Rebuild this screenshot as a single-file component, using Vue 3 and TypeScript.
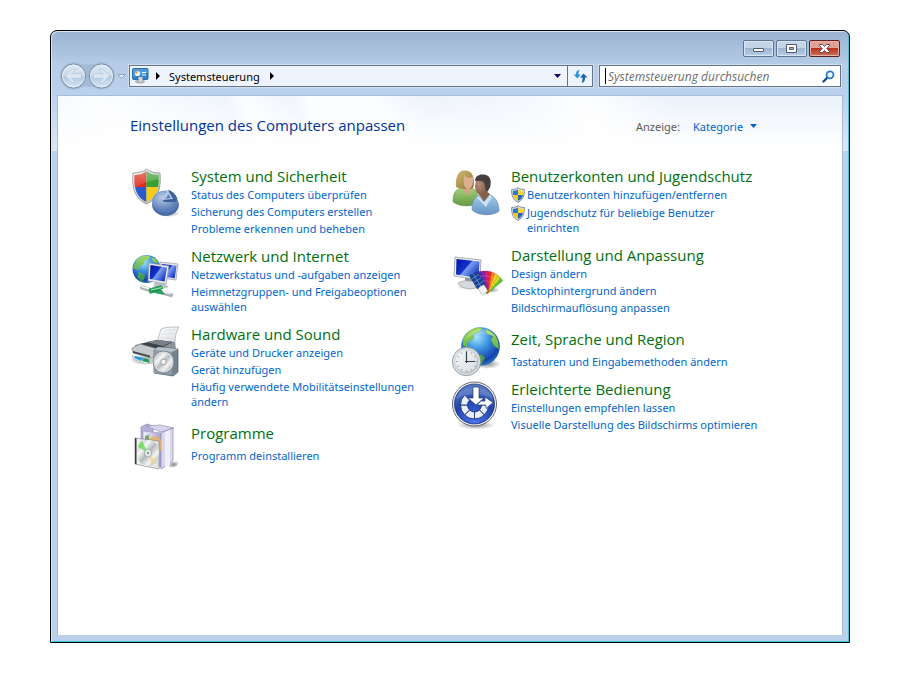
<script setup lang="ts">
import { ref } from 'vue'

type IconName =
  | 'security' | 'network' | 'hardware' | 'programs'
  | 'users' | 'appearance' | 'region' | 'access'

interface Task { text: string; shield?: boolean }
interface Category { icon: IconName; title: string; tasks: Task[] }

const columns: Category[][] = [
  [
    {
      icon: 'security',
      title: 'System und Sicherheit',
      tasks: [
        { text: 'Status des Computers überprüfen' },
        { text: 'Sicherung des Computers erstellen' },
        { text: 'Probleme erkennen und beheben' },
      ],
    },
    {
      icon: 'network',
      title: 'Netzwerk und Internet',
      tasks: [
        { text: 'Netzwerkstatus und -aufgaben anzeigen' },
        { text: 'Heimnetzgruppen- und Freigabeoptionen auswählen' },
      ],
    },
    {
      icon: 'hardware',
      title: 'Hardware und Sound',
      tasks: [
        { text: 'Geräte und Drucker anzeigen' },
        { text: 'Gerät hinzufügen' },
        { text: 'Häufig verwendete Mobilitätseinstellungen ändern' },
      ],
    },
    {
      icon: 'programs',
      title: 'Programme',
      tasks: [{ text: 'Programm deinstallieren' }],
    },
  ],
  [
    {
      icon: 'users',
      title: 'Benutzerkonten und Jugendschutz',
      tasks: [
        { text: 'Benutzerkonten hinzufügen/entfernen', shield: true },
        { text: 'Jugendschutz für beliebige Benutzer einrichten', shield: true },
      ],
    },
    {
      icon: 'appearance',
      title: 'Darstellung und Anpassung',
      tasks: [
        { text: 'Design ändern' },
        { text: 'Desktophintergrund ändern' },
        { text: 'Bildschirmauflösung anpassen' },
      ],
    },
    {
      icon: 'region',
      title: 'Zeit, Sprache und Region',
      tasks: [{ text: 'Tastaturen und Eingabemethoden ändern' }],
    },
    {
      icon: 'access',
      title: 'Erleichterte Bedienung',
      tasks: [
        { text: 'Einstellungen empfehlen lassen' },
        { text: 'Visuelle Darstellung des Bildschirms optimieren' },
      ],
    },
  ],
]

const fanColors = ['#5cc22c', '#c9de1f', '#f8cc1e', '#f3801c', '#e8262a', '#d01c8c', '#8a1fa8', '#4a2fb4']
const ticks = Array.from({ length: 12 }, (_, i) => i * 30)
const segments = [90, 135, 180, 225, 270]

const query = ref('')
const view = ref('Kategorie')
</script>

<template>
  <div class="desktop">
    <svg class="defs" aria-hidden="true">
      <defs>
        <radialGradient id="globe" cx="0.4" cy="0.25" r="0.8">
          <stop offset="0" stop-color="#a8e4fb" />
          <stop offset="0.4" stop-color="#3c93e0" />
          <stop offset="0.8" stop-color="#1440ac" />
          <stop offset="1" stop-color="#2c86cc" />
        </radialGradient>
        <linearGradient id="land" x1="0" y1="0" x2="0" y2="1">
          <stop offset="0" stop-color="#a6dc5c" />
          <stop offset="1" stop-color="#2f9440" />
        </linearGradient>
        <linearGradient id="screen" x1="0" y1="0" x2="1" y2="0.7">
          <stop offset="0" stop-color="#0512a4" />
          <stop offset="0.48" stop-color="#1233cc" />
          <stop offset="0.54" stop-color="#7ba0f0" />
          <stop offset="1" stop-color="#1231c4" />
        </linearGradient>
        <linearGradient id="silver" x1="0" y1="0" x2="1" y2="1">
          <stop offset="0" stop-color="#ffffff" />
          <stop offset="1" stop-color="#a9afb5" />
        </linearGradient>
        <linearGradient id="paper" x1="0" y1="0" x2="1" y2="1">
          <stop offset="0" stop-color="#ffffff" />
          <stop offset="1" stop-color="#d5d9dd" />
        </linearGradient>
        <linearGradient id="disc" x1="0" y1="0" x2="1" y2="1">
          <stop offset="0" stop-color="#9ea3a3" />
          <stop offset="0.3" stop-color="#f6f7f7" />
          <stop offset="0.5" stop-color="#b4babd" />
          <stop offset="0.7" stop-color="#f4f4f4" />
          <stop offset="1" stop-color="#979da0" />
        </linearGradient>
        <radialGradient id="pie" cx="0.4" cy="0.3" r="0.8">
          <stop offset="0" stop-color="#b5cae8" />
          <stop offset="1" stop-color="#4469a8" />
        </radialGradient>
        <linearGradient id="sheen" x1="0" y1="0" x2="0" y2="1">
          <stop offset="0" stop-color="#fff" stop-opacity="0.4" />
          <stop offset="1" stop-color="#fff" stop-opacity="0.05" />
        </linearGradient>
        <radialGradient id="shadow">
          <stop offset="0" stop-color="#000" stop-opacity="0.45" />
          <stop offset="1" stop-color="#000" stop-opacity="0" />
        </radialGradient>
        <linearGradient id="green" x1="0" y1="0" x2="0" y2="1">
          <stop offset="0" stop-color="#a8d07c" />
          <stop offset="1" stop-color="#629a42" />
        </linearGradient>
        <linearGradient id="blue" x1="0" y1="0" x2="0" y2="1">
          <stop offset="0" stop-color="#a9cdec" />
          <stop offset="1" stop-color="#6496c4" />
        </linearGradient>
        <linearGradient id="hair" x1="0" y1="0" x2="1" y2="1">
          <stop offset="0" stop-color="#d3bb72" />
          <stop offset="1" stop-color="#8c7034" />
        </linearGradient>
        <radialGradient id="face" cx="0.3" cy="0.4" r="0.8">
          <stop offset="0" stop-color="#b98c76" />
          <stop offset="1" stop-color="#74503f" />
        </radialGradient>
        <radialGradient id="badge" cx="0.5" cy="0.95" r="0.9">
          <stop offset="0" stop-color="#4a74f0" />
          <stop offset="0.6" stop-color="#2143ac" />
          <stop offset="1" stop-color="#5578c4" />
        </radialGradient>
        <linearGradient id="orb" x1="0" y1="0" x2="0" y2="1">
          <stop offset="0" stop-color="#dfe9f3" />
          <stop offset="0.48" stop-color="#cbdbea" />
          <stop offset="0.52" stop-color="#b1c8df" />
          <stop offset="1" stop-color="#d8e9f7" />
        </linearGradient>
        <linearGradient id="box" x1="0" y1="0" x2="1" y2="0">
          <stop offset="0" stop-color="#f1f0fb" />
          <stop offset="1" stop-color="#a9a6d0" />
        </linearGradient>
        <clipPath id="shieldClip">
          <path d="M14.500 3 C18 6 22 7 26.500 7 C27.500 19 25 29 14.500 34 C4 29 1.500 19 2.500 7 C7 7 11 6 14.500 3Z" />
        </clipPath>
      </defs>
    </svg>

    <main class="window">
      <header class="titlebar">
        <button class="caption" type="button" aria-label="Minimieren">
          <svg width="13" height="11" viewBox="0 0 13 11"><rect x="1.500" y="5.500" width="10" height="3" rx="0.500" fill="#fff" stroke="#535b68" /></svg>
        </button>
        <button class="caption" type="button" aria-label="Maximieren">
          <svg width="13" height="11" viewBox="0 0 13 11"><path fill-rule="evenodd" d="M1.500 1.500h10v8h-10z M4.500 4.500h4v2h-4z" fill="#fff" stroke="#535b68" /></svg>
        </button>
        <button class="caption close" type="button" aria-label="Schließen">
          <svg width="13" height="11" viewBox="0 0 13 11"><path d="M1.500 1.500h3l2 2 2-2h3v1l-2.700 3 2.700 3v1h-3l-2-2-2 2h-3v-1l2.700-3-2.700-3z" fill="#fff" stroke="#5c4550" /></svg>
        </button>
      </header>

      <div class="toolbar">
        <div class="history">
          <svg width="70" height="28" viewBox="0 0 70 28" aria-hidden="true">
            <path d="M14.500 .7 C21 .7 21 3 28.500 3 C36 3 36 .7 42.500 .7 A13.300 13.300 0 0 1 42.500 27.300 C36 27.300 36 24 28.500 24 C21 24 21 27.300 14.500 27.300 A13.300 13.300 0 0 1 14.500 .7Z" fill="#a3bad3" stroke="#a9c0da" />
            <g v-for="x in [14.5, 42.5]" :key="x">
              <circle :cx="x" cy="14" r="12" fill="url(#orb)" stroke="#72889f" />
              <circle :cx="x" cy="14" r="11" fill="none" stroke="#edf5fc" stroke-opacity="0.8" />
            </g>
            <path d="M6.500 14 L13.500 7 H17 L12.500 11.700 H22.500 V16.300 H12.500 L17 21 H13.500Z" fill="#dce7f2" stroke="#b7c9dc" stroke-width="0.700" />
            <path d="M50.500 14 L43.500 7 H40 L44.500 11.700 H34.500 V16.300 H44.500 L40 21 H43.500Z" fill="#dce7f2" stroke="#b7c9dc" stroke-width="0.700" />
            <path d="M58.500 12.500 H66.500 L62.500 16.500Z" fill="#d9e6f4" stroke="#8fa6c0" />
          </svg>
        </div>

        <nav class="address" aria-label="Adresse">
          <svg class="place" width="17" height="16" viewBox="0 0 17 16" aria-hidden="true">
            <ellipse cx="8" cy="13.500" rx="5" ry="2" fill="#b4b8bb" />
            <rect x="0.500" y="0.500" width="15.500" height="11" rx="1" fill="#2b83cb" stroke="#266ca6" />
            <path d="M1 1h14.500v4L1 9z" fill="#6db5e8" opacity="0.5" />
            <circle cx="5.500" cy="5.500" r="2.600" fill="#f3f6f8" />
            <path d="M5.500 5.500V2.900a2.600 2.600 0 0 0-2.600 2.600z" fill="#f49b25" />
            <path d="M10 4.500h4M10 7h4" stroke="#fff" />
            <path d="M6.500 9h4v3.500a2 2 0 0 1-4 0z" fill="#d5d9dc" stroke="#9aa0a5" stroke-width="0.600" />
          </svg>
          <svg width="5" height="8" viewBox="0 0 5 8" aria-hidden="true"><path d="M0 0 4 4 0 8z" fill="#000" /></svg>
          <a class="crumb" href="#">Systemsteuerung</a>
          <svg width="5" height="8" viewBox="0 0 5 8" aria-hidden="true"><path d="M0 0 4 4 0 8z" fill="#000" /></svg>
          <button class="drop" type="button" aria-label="Vorherige Orte">
            <svg width="7" height="4" viewBox="0 0 7 4"><path d="M0 0h7L3.500 4z" fill="#05055c" /></svg>
          </button>
          <button class="refresh" type="button" aria-label="Aktualisieren">
            <svg width="15" height="14" viewBox="0 0 15 14">
              <path d="M6.500 1C4 1 3 2.500 3 5.500H.5L4.500 9.500 7.500 5.500H5.500C5.500 3.500 5.500 2.500 6.500 1Z" fill="#2e94d8" />
              <path d="M8.500 13.500C11.500 13.500 12 11.500 12 8.500H14.500L10.500 4.500 7 8.500H9.500C9.500 10.500 9.500 12 8.500 13.500Z" fill="#1d62ae" />
            </svg>
          </button>
        </nav>

        <form class="search" role="search" @submit.prevent>
          <input v-model="query" type="text" placeholder="Systemsteuerung durchsuchen" aria-label="Systemsteuerung durchsuchen">
          <button type="submit" aria-label="Suchen">
            <svg width="13" height="13" viewBox="0 0 13 13">
              <path d="M1.500 11.500 5 8" stroke="#1b4893" stroke-width="2.400" stroke-linecap="round" />
              <circle cx="8" cy="4.800" r="3.500" fill="#e8f5fd" stroke="#2a7bc5" stroke-width="1.800" />
            </svg>
          </button>
        </form>
      </div>

      <section class="client">
        <header class="heading">
          <h1>Einstellungen des Computers anpassen</h1>
          <div class="view">
            <label for="view">Anzeige:</label>
            <select id="view" v-model="view">
              <option>Kategorie</option>
            </select>
            <svg width="7" height="4" viewBox="0 0 7 4" aria-hidden="true"><path d="M0 0h7L3.500 4z" fill="#0066cc" /></svg>
          </div>
        </header>

        <div class="columns">
          <div v-for="(column, c) in columns" :key="c" class="column">
            <article v-for="item in column" :key="item.title" class="category" :class="{ single: item.tasks.length === 1 }">
              <svg class="icon" width="48" height="50" viewBox="0 0 48 50" aria-hidden="true">
                <g v-if="item.icon === 'security'">
                  <ellipse cx="37" cy="45" rx="11" ry="4" fill="url(#shadow)" />
                  <path d="M14.500 1 C18 4 23 5 28 5 C29.500 20 26 31 14.500 36 C3 31 -.5 20 1 5 C6 5 11 4 14.500 1Z" fill="url(#silver)" stroke="#8c9196" stroke-width="0.800" />
                  <g clip-path="url(#shieldClip)">
                    <path d="M0 0h14.500v19H0z" fill="#dd2c1d" />
                    <path d="M14.500 0H30v19H14.500z" fill="#38a12f" />
                    <path d="M0 19h14.500v18H0z" fill="#2a5cc9" />
                    <path d="M14.500 19H30v18H14.500z" fill="#f9cb19" />
                    <path d="M0 0H30V11C20 12 9 15 0 22z" fill="url(#sheen)" />
                  </g>
                  <ellipse cx="33.500" cy="37" rx="13" ry="10.500" fill="#4a6eae" stroke="#3d5c94" stroke-width="0.700" />
                  <ellipse cx="33" cy="33.500" rx="12.500" ry="10.500" fill="url(#pie)" stroke="#6d8dc0" stroke-width="0.700" />
                  <path d="M31.500 34 36 21.500c4 1.500 7.500 4.500 9 8.500l-1 4z" fill="#3e619f" />
                  <path d="M30.500 32.500 36.500 22l5.500 9.500z" fill="#a8c0e2" stroke="#2f4f88" stroke-width="0.900" />
                  <path d="M30.500 32.500 36.500 22" stroke="#e6eefa" />
                  <path d="M34 30.500 36.500 26.500 38.500 30z" fill="#5577b0" />
                </g>

                <g v-else-if="item.icon === 'network'">
                  <circle cx="14.500" cy="21" r="14" fill="url(#globe)" />
                  <path d="M3 15C6 8 12 7 18 8l-1 3-4 1-1 4-4 2-1 4-4-1-2-1zM19 9l5 2 3 5-6-2zM7 24l6 3-1 5-3 2-4-5zM16 18l4 1-1 4-4-2z" fill="url(#land)" opacity="0.9" />
                  <path d="M28 14l18 2-2 16-15-2z" fill="#e1e4e8" stroke="#979ea8" stroke-width="0.700" />
                  <path d="M30 16l14.500 1.700-1.800 12.500L31 28.500z" fill="url(#screen)" />
                  <path d="M23 35l9 1 4 3c-5 1-11 1-14-1z" fill="#c2c6ca" stroke="#9aa0a4" stroke-width="0.500" />
                  <path d="M17 15l20 3-3 18-18-3z" fill="#e9ecef" stroke="#8f969f" stroke-width="0.700" />
                  <path d="M18.500 17l16.500 2.500-2.400 14-15-2.500z" fill="url(#screen)" />
                  <path d="M10 39.500l8 2.500M30 44.500l9 2.500" stroke="#adb1b3" stroke-width="4" stroke-linecap="round" />
                  <path d="M10 38.700l7 2M31 43.500l7 2" stroke="#fafafa" stroke-width="1.500" stroke-linecap="round" />
                  <path d="M17 41l12-3.500 2 3-13 5zM19 43l10-1 3 4-6-.5z" fill="#28a85c" stroke="#14894a" stroke-width="0.700" />
                  <path d="M19 42l11-2.500" stroke="#9be8b8" />
                </g>

                <g v-else-if="item.icon === 'hardware'">
                  <ellipse cx="12" cy="34" rx="14" ry="5" fill="url(#shadow)" />
                  <path d="M29 3c5-2 11-2 18-2-3 5-4 10-4 16l-18-1z" fill="url(#paper)" stroke="#a4aab0" stroke-width="0.700" />
                  <path d="M31 5c4-1 8-1.500 12-1.500M29.500 8.500c4-1 8-1 12-1M28.500 12h12" stroke="#d3d7da" stroke-width="0.600" fill="none" />
                  <path d="M3 19l22-5 18 2 1 7-18 6-22-5z" fill="#8d9499" />
                  <path d="M8 18l17-4 16 2-16 8z" fill="#3c4247" />
                  <path d="M14 16l12-2 14 2-9 4z" fill="#7a8288" />
                  <path d="M0 22l8-4 18 5v7l-7 2-18-5z" fill="#c4cacd" stroke="#72797e" stroke-width="0.600" />
                  <path d="M1 25l17 4.500v2L1 27z" fill="#4a5055" />
                  <path d="M0 29.500l18 4.500 2 3-6 1-13-5z" fill="#f1f3f4" stroke="#a2a8ac" stroke-width="0.600" />
                  <path d="M3 30l9 2-3 3-7-3z" fill="#2a9adc" />
                  <path d="M12 32l5 1.500 1 3.500-8-2z" fill="#24995a" />
                  <path d="M22 24l4-3 20 2v23l-5 4-19-3z" fill="#75828e" stroke="#4c5964" stroke-width="0.700" />
                  <path d="M22 24l18 2v23l-18-2z" fill="#8d9ba7" />
                  <path d="M22 24l4-3 20 2-6 3z" fill="#b4c0ca" />
                  <ellipse cx="31.500" cy="36" rx="10.500" ry="11" fill="#d5dadf" stroke="#6f7b86" stroke-width="0.800" />
                  <ellipse cx="31.500" cy="36" rx="8.500" ry="9" fill="url(#disc)" />
                  <circle cx="31.500" cy="36" r="2.800" fill="#f2f3f4" stroke="#7d858b" stroke-width="0.700" />
                </g>

                <g v-else-if="item.icon === 'programs'">
                  <path d="M38 42l10-3-3 6-10 3z" fill="url(#shadow)" />
                  <path d="M9 6l6-3 6 2v38L9 40z" fill="#b4b0d8" stroke="#8c88b2" stroke-width="0.700" />
                  <path d="M14 5l14-1 14 3-13 4z" fill="#d7d5ed" stroke="#8884ae" stroke-width="0.600" />
                  <path d="M11 10l18 2v34l-18-3z" fill="url(#box)" stroke="#9a96be" stroke-width="0.700" />
                  <path d="M29 12l12-5v33l-12 8z" fill="#d9d7ee" stroke="#8d89b2" stroke-width="0.700" />
                  <path d="M33 11l5-2v34l-5 3z" fill="#efeefa" />
                  <path d="M17 18l5-3 4 1 3 3v11l-12-3z" fill="#e9b062" opacity="0.85" />
                  <path d="M13 15l4-1v6l-4 2z" fill="#70a96b" />
                  <path d="M3 17l24 3v28L3 43z" fill="#e7ecea" fill-opacity="0.8" stroke="#858c89" stroke-width="0.700" />
                  <path d="M3 17l1.500.2v26L3 43z" fill="#353b38" />
                  <ellipse cx="16" cy="32" rx="11" ry="13" fill="url(#disc)" />
                  <path d="M16 32 6 26c1-3 2-5 4-6z" fill="#61df50" opacity="0.8" />
                  <path d="M16 32l4 12 4-4z" fill="#f3d487" opacity="0.8" />
                  <ellipse cx="16" cy="32" rx="3.500" ry="4" fill="#e9ebeb" stroke="#8e9595" stroke-width="0.700" />
                  <circle cx="16" cy="32" r="1.200" fill="#8e9692" />
                </g>

                <g v-else-if="item.icon === 'users'">
                  <ellipse cx="36" cy="43" rx="13" ry="5" fill="url(#shadow)" />
                  <path d="M1 34C1 25 3 21 11 20h8c5 1 7 5 7 15-6 4-18 4-25-1z" fill="url(#green)" stroke="#6c9650" stroke-width="0.600" />
                  <path d="M10 20l5 8 5-8-3-4h-5z" fill="#d3a183" />
                  <path d="M4 19C3 8 7 2 13 2.500c7 0 9 6 9 12 0 4-1 6-2 6-6 1-11 1-16-1.500z" fill="url(#hair)" />
                  <path d="M12 7c3 3 6 3 9 2 .5 6-1 11-4 12-5 0-6-5-5-14z" fill="#dcb08f" />
                  <path d="M20 42c0-9 2-13 8-15l8-1c7 2 11 8 11 17-6 5-21 5-27-1z" fill="url(#blue)" stroke="#6288b0" stroke-width="0.600" />
                  <path d="M27 26l5 8 6-8-4-3-6 1z" fill="#8a614d" />
                  <path d="M26 28l6 6 6-7 2 2-6 10-9-9z" fill="#cbe1f4" />
                  <ellipse cx="29.500" cy="18" rx="6.500" ry="9.500" fill="url(#face)" />
                  <path d="M23 13c0-5 4-7 9-6.500 6 .5 8 6 6 13l-3 5-1.500-4-1-5c-1-3-5-3-9.500-2.500z" fill="#45403f" />
                </g>

                <g v-else-if="item.icon === 'appearance'">
                  <ellipse cx="18" cy="39" rx="13" ry="4" fill="url(#shadow)" />
                  <path d="M13 30l7 1v5h-7z" fill="#8b9298" />
                  <path d="M6 36c3-3 14-3 20 0l-3 5c-5 2-15 0-17-5z" fill="#d6dadd" stroke="#989ea3" stroke-width="0.600" />
                  <path d="M3 10l26 3-1 20L2 29z" fill="#eff1f3" stroke="#858c94" stroke-width="0.700" />
                  <path d="M4.500 12l23 2.500-1 16.500-22.500-3.500z" fill="url(#screen)" />
                  <ellipse cx="38" cy="43" rx="10" ry="3" fill="url(#shadow)" />
                  <g v-for="(color, i) in fanColors" :key="color" :transform="`rotate(${50 - i * 10} 33 45)`">
                    <rect x="30" y="24" width="6" height="21" rx="0.800" :fill="color" stroke="#5a1d4a" stroke-opacity="0.300" stroke-width="0.500" />
                    <path d="M30 29h6M30 34h6" stroke="#fff" stroke-opacity="0.3" stroke-width="0.600" />
                  </g>
                  <g transform="rotate(-32 33 45)">
                    <rect x="28" y="23" width="9" height="16" rx="1" fill="#17408f" />
                    <path d="M28 27h9M28 31h9M28 35h9M32.500 23v16" stroke="#6c94e0" stroke-width="0.700" />
                    <rect x="29" y="38" width="7" height="8" rx="1.500" fill="#f3f4f6" stroke="#9ea4a9" stroke-width="0.600" />
                  </g>
                </g>

                <g v-else-if="item.icon === 'region'">
                  <ellipse cx="35" cy="37" rx="14" ry="5" fill="url(#shadow)" />
                  <circle cx="28.500" cy="19.500" r="19.300" fill="url(#globe)" />
                  <path d="M11 12C15 4 22 0 30 1l-3 4-5 2-1 5-5 3-1 6-4-3zM33 2c7 2 11 6 13 12l1 8-5-3-3-6 2-4-6-2zM24 27l6 1 3 3-4 7-5 0z" fill="url(#land)" stroke="#3f8a33" stroke-opacity="0.4" stroke-width="0.500" />
                  <path d="M13 12C19 1 36-2 44 10c-7-3-22-5-31 2z" fill="#fff" opacity="0.2" />
                  <circle cx="14.500" cy="34.500" r="14.200" fill="#dfe3e6" stroke="#858c91" stroke-width="0.800" />
                  <circle cx="14.500" cy="34.500" r="12" fill="url(#silver)" stroke="#bbc2c7" stroke-width="0.600" />
                  <circle cx="14.500" cy="34.500" r="10.500" fill="#eef2f4" opacity="0.7" />
                  <path v-for="t in ticks" :key="t" d="M14.500 24v1.800" :transform="`rotate(${t} 14.500 34.500)`" stroke="#8c979e" stroke-width="0.800" />
                  <path d="M14.500 36V24.500M13 34.500h10" stroke="#34434d" stroke-width="1.200" fill="none" />
                </g>

                <g v-else>
                  <ellipse cx="24" cy="44" rx="19" ry="4.500" fill="url(#shadow)" />
                  <circle cx="22.500" cy="23" r="22" fill="#f8f9fa" stroke="#60666f" />
                  <circle cx="22.500" cy="23" r="20" fill="url(#badge)" stroke="#15296c" stroke-width="0.800" />
                  <path
                    v-for="s in segments"
                    :key="s"
                    d="M22.500 10a14 14 0 0 1 9.900 4.100l-5 5a7 7 0 0 0-4.900-2.100z"
                    :transform="`rotate(${s} 22.500 24)`"
                    fill="#e9eef8"
                    stroke="#1c3482"
                    stroke-width="0.900"
                  />
                  <path d="M4 18C7 3 38 3 41 18c-9-6-28-6-37 0z" fill="#fff" opacity="0.15" />
                  <path d="M21 6h6v11h5l-8 7-8-7h5z" fill="#fff" stroke="#273e82" stroke-width="0.700" />
                  <path d="M25 24l4-4h4v-4l8 5.500-7 6v-3.500z" fill="#fff" stroke="#273e82" stroke-width="0.700" />
                </g>
              </svg>

              <div class="body">
                <h2><a href="#">{{ item.title }}</a></h2>
                <ul>
                  <li v-for="task in item.tasks" :key="task.text">
                    <svg v-if="task.shield" width="14" height="16" viewBox="0 0 14 16" aria-hidden="true">
                      <path d="M7 .7C8.700 2 11 2.500 13.300 2.500 13.600 8.500 12 13 7 15.300 2 13 .4 8.500.7 2.500 3 2.500 5.300 2 7 .7Z" fill="#dce4ea" stroke="#73818e" stroke-width="0.900" />
                      <path d="M7 2.200V8H2C1.800 6.500 1.800 5 2 3.800 4 3.700 5.700 3.200 7 2.200Z" fill="#2b7bc9" />
                      <path d="M7 2.200C8.300 3.200 10 3.700 12 3.800 12.200 5 12.200 6.500 12 8H7Z" fill="#fbd53a" />
                      <path d="M2 8H7V14C4 12.500 2.500 10.700 2 8Z" fill="#f8c51f" />
                      <path d="M7 8H12C11.500 10.700 10 12.500 7 14Z" fill="#2568ba" />
                    </svg>
                    <a href="#">{{ task.text }}</a>
                  </li>
                </ul>
              </div>
            </article>
          </div>
        </div>
      </section>
    </main>
  </div>
</template>

<style>
body {
  background: #fff;
}
</style>

<style scoped>
* {
  box-sizing: border-box;
}

.desktop {
  display: flex;
  min-height: 100vh;
  padding: 30px 50px;
  font: 11px/15px "Noto Sans", "Open Sans", sans-serif;
}

.defs {
  position: absolute;
  width: 0;
  height: 0;
}

button,
input,
select {
  margin: 0;
  padding: 0;
  border: 0;
  background: none;
  font: inherit;
  color: inherit;
}

a {
  color: inherit;
  text-decoration: none;
}

a:hover {
  text-decoration: underline;
}

svg {
  display: block;
  flex: none;
}

.window {
  display: flex;
  flex: 1;
  flex-direction: column;
  min-width: 0;
  padding: 0 6px 7px;
  border: 1px solid #000;
  border-radius: 7px 7px 0 0;
  background: linear-gradient(#9ab3d0 0, #b6cce7 34px, #bcd1eb 66px, #dce8f6 120px, #b9d1ea 120px);
  box-shadow: inset 1px 1px 0 #dbe7f3, inset -1px -1px 0 #36c5de;
}

.titlebar {
  display: flex;
  justify-content: flex-end;
  gap: 2px;
  padding: 9px 3px 0 0;
}

.caption {
  display: flex;
  align-items: center;
  justify-content: center;
  width: 31px;
  height: 17px;
  border: 1px solid #5f7693;
  border-radius: 2px;
  background: linear-gradient(#c4d5e8 0 47%, #9eb7d3 50%, #b8cee8);
  box-shadow: inset 0 0 0 1px #d9e6f4;
}

.close {
  border-color: #5a1f28;
  background: linear-gradient(#e2a195 0 44%, #b8331f 50%, #cf7358);
  box-shadow: inset 0 0 0 1px #e9b0a6;
}

.toolbar {
  display: flex;
  align-items: center;
  gap: 6px;
  padding: 5px 2px;
}

.history {
  width: 64px;
}

.address {
  display: flex;
  flex: 1;
  align-items: center;
  height: 22px;
  border: 1px solid #64758a;
  background: #eff4fc;
  box-shadow: 0 0 0 1px #cfdef0;
  color: #000;
}

.place {
  margin: 0 7px 0 2px;
}

.crumb {
  margin: 0 10px 0 8px;
}

.drop,
.refresh {
  display: flex;
  align-items: center;
  justify-content: center;
  align-self: stretch;
}

.drop {
  width: 20px;
  margin-left: auto;
}

.refresh {
  width: 25px;
  border-left: 1px solid #64758a;
}

.search {
  display: flex;
  align-items: center;
  justify-content: space-between;
  width: 242px;
  height: 22px;
  padding: 0 5px;
  border: 1px solid #64758a;
  background: #fff;
  box-shadow: 0 0 0 1px #cfdef0;
}

.search input {
  flex: 1;
  min-width: 0;
  height: 16px;
  padding-left: 2px;
  border-left: 1px solid #000;
  outline: none;
  font-family: "Open Sans", "Noto Sans", sans-serif;
  font-size: 12px;
  font-style: italic;
}

.search input::placeholder {
  color: #6d6d6d;
  opacity: 1;
}

.client {
  flex: 1;
  border: 1px solid #a6bdd8;
  border-width: 1px 1px 0;
  background: #fff;
}

.heading {
  display: flex;
  align-items: center;
  justify-content: space-between;
  height: 60px;
  padding: 0 85px 0 72px;
  background:
    linear-gradient(rgba(255, 255, 255, 0) 0, #fff 90%),
    linear-gradient(65deg, #f4f8fd 0, #fcfdff 8%, #f0f5fc 24%, #fbfdff 26%, #eff4fc 32%, #fbfdff 34%, #fbfdff 42%, #eef3fb 48%, #f3f7fd 60%, #fdfeff 68%, #ecf2fb 78%);
}

h1,
h2 {
  margin: 0 0 2px;
  font-family: "Open Sans", "Noto Sans", sans-serif;
  font-size: 15px;
  font-weight: 400;
  line-height: 18px;
}

h1 {
  color: #003399;
}

.view {
  display: flex;
  align-items: center;
  color: #5a5a5a;
}

.view select {
  margin: 0 6px 0 13px;
  appearance: none;
  color: #0066cc;
}

.columns {
  display: grid;
  grid-template-columns: repeat(2, 314px);
  gap: 6px;
  padding: 11px 0 11px 74px;
}

.column {
  display: flex;
  flex-direction: column;
  gap: 11px;
}

.category {
  display: flex;
  align-items: flex-start;
  gap: 11px;
}

.icon {
  margin: 1px 0 -8px;
  overflow: visible;
}

h2 {
  color: #00700f;
}

ul {
  display: grid;
  gap: 2px;
  margin: 0;
  padding: 0;
  list-style: none;
  color: #0066cc;
}

li {
  display: flex;
  gap: 2px;
}

.single .body {
  padding-top: 4px;
}

.single ul {
  padding-top: 4px;
}
</style>
